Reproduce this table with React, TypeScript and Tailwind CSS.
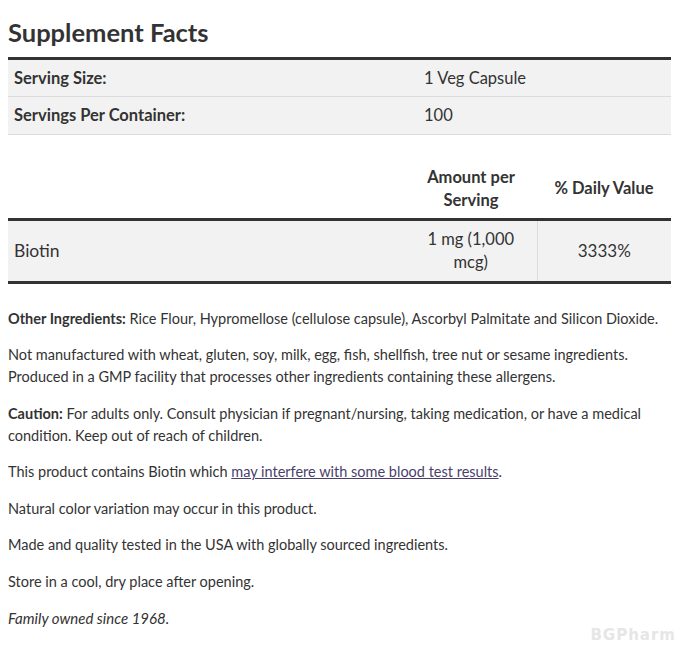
import React from "react";

export default function App() {
  const font = { fontFamily: "Lato, 'Open Sans', sans-serif" };
  return (
    <div className="w-[682px] h-[648px] bg-white text-[#333] relative overflow-hidden" style={font}>
      <div className="px-2 pt-[17px]">
        <h2 className="text-[25.5px] font-bold leading-[30px] text-[#333]">Supplement Facts</h2>
        <table className="w-[663px] mt-[10px] border-t-[3px] border-[#333] border-collapse">
          <tbody>
            <tr className="bg-[#f2f2f2] border-b border-[#dcdcdc]">
              <td className="h-[38px] pl-[6px] text-[16.5px] font-bold w-[416px]">Serving Size:</td>
              <td className="text-[16.5px]">1 Veg Capsule</td>
            </tr>
            <tr className="bg-[#f2f2f2] border-b border-[#dcdcdc]">
              <td className="h-[38px] pl-[6px] text-[16.5px] font-bold">Servings Per Container:</td>
              <td className="text-[16.5px]">100</td>
            </tr>
          </tbody>
        </table>
        <table className="w-[663px] mt-[30px] border-collapse">
          <thead>
            <tr className="border-b-[3px] border-[#333]">
              <th className="w-[397px]"></th>
              <th className="w-[132px] h-[54px] pb-[4px] text-[16.5px] font-bold leading-[23px] text-center align-middle">
                Amount per<br />Serving
              </th>
              <th className="pb-[6px] text-[16.5px] font-bold text-center align-middle">% Daily Value</th>
            </tr>
          </thead>
          <tbody>
            <tr className="bg-[#f2f2f2] border-b-[3px] border-[#333]">
              <td className="h-[63px] pl-[6px] pt-[2px] text-[17.5px]">Biotin</td>
              <td className="text-[16.5px] leading-[23px] text-center px-[18px] border-r border-[#dcdcdc]">1 mg (1,000 mcg)</td>
              <td className="text-[17px] text-center">3333%</td>
            </tr>
          </tbody>
        </table>
        <div className="mt-[24px] text-[14.5px] leading-[22px] text-[#333]">
          <p className="mb-[14.5px]"><b className="font-bold">Other Ingredients:</b> Rice Flour, Hypromellose (cellulose capsule), Ascorbyl Palmitate and Silicon Dioxide.</p>
          <p className="mb-[14.5px]">Not manufactured with wheat, gluten, soy, milk, egg, fish, shellfish, tree nut or sesame ingredients.<br />Produced in a GMP facility that processes other ingredients containing these allergens.</p>
          <p className="mb-[14.5px]"><b className="font-bold">Caution:</b> For adults only. Consult physician if pregnant/nursing, taking medication, or have a medical condition. Keep out of reach of children.</p>
          <p className="mb-[14.5px]">This product contains Biotin which <span className="underline text-[#4a3f6b]">may interfere with some blood test results</span>.</p>
          <p className="mb-[14.5px]">Natural color variation may occur in this product.</p>
          <p className="mb-[14.5px]">Made and quality tested in the USA with globally sourced ingredients.</p>
          <p className="mb-[14.5px]">Store in a cool, dry place after opening.</p>
          <p className="mb-[14.5px] italic text-[15px]">Family owned since 1968.</p>
        </div>
      </div>
      <div className="absolute right-[6px] top-[624px] text-[15px] font-bold tracking-[1px] text-[#e6e6e6]" style={{ fontFamily: "'DejaVu Sans', sans-serif" }}>BGPharm</div>
    </div>
  );
}
